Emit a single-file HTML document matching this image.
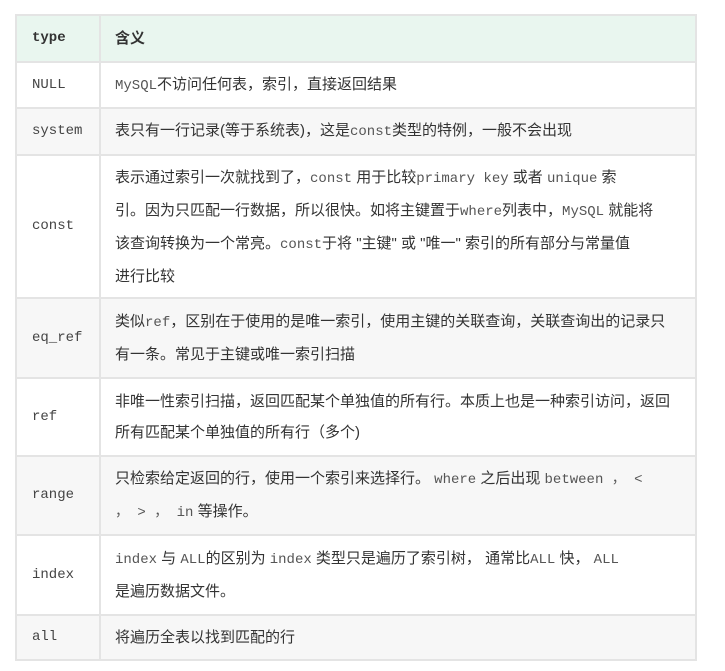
<!DOCTYPE html>
<html><head><meta charset="utf-8"><style>
body{margin:0;background:#fff;width:725px;height:671px;overflow:hidden;font-family:"Liberation Sans","Noto Sans CJK SC",sans-serif;color:#333;}
table{position:absolute;left:15px;top:14px;width:682px;border-collapse:collapse;font-size:15px;}
td{border:2px solid #e4e4e4;padding:0 8px 0 14px;vertical-align:middle;line-height:31px;white-space:nowrap;}
td:first-child{width:59px;font-family:"Liberation Mono",monospace;font-size:14px;color:#444;padding-left:15px;}
.m{font-family:"Liberation Mono",monospace;font-size:14px;color:#555;}
tr.g td{background:#f7f7f7}
tr.h td{background:#e9f6ef;font-weight:bold;color:#333;}
</style></head><body>
<table>
<tr class="h" style="height:47px"><td style="color:#333;font-weight:bold">type</td><td>含义</td></tr>
<tr style="height:46px"><td>NULL</td><td><span class="m">MySQL</span>不访问任何表，索引，直接返回结果</td></tr>
<tr class="g" style="height:47px"><td>system</td><td>表只有一行记录(等于系统表)，这是<span class="m">const</span>类型的特例，一般不会出现</td></tr>
<tr style="height:143px"><td>const</td><td>表示通过索引一次就找到了，<span class="m">const</span> 用于比较<span class="m">primary key</span> 或者 <span class="m">unique</span> 索<br>引。因为只匹配一行数据，所以很快。如将主键置于<span class="m">where</span>列表中，<span class="m">MySQL</span> 就能将<br>该查询转换为一个常亮。<span class="m">const</span>于将 "主键" 或 "唯一" 索引的所有部分与常量值<br>进行比较</td></tr>
<tr class="g" style="height:80px"><td>eq_ref</td><td>类似<span class="m">ref</span>，区别在于使用的是唯一索引，使用主键的关联查询，关联查询出的记录只<br>有一条。常见于主键或唯一索引扫描</td></tr>
<tr style="height:78px"><td>ref</td><td>非唯一性索引扫描，返回匹配某个单独值的所有行。本质上也是一种索引访问，返回<br>所有匹配某个单独值的所有行（多个)</td></tr>
<tr class="g" style="height:79px"><td>range</td><td>只检索给定返回的行，使用一个索引来选择行。 <span class="m">where</span> 之后出现 <span class="m">between ， &lt;</span><br><span class="m">， &gt; ， in</span> 等操作。</td></tr>
<tr style="height:80px"><td>index</td><td><span class="m">index</span> 与 <span class="m">ALL</span>的区别为 <span class="m">index</span> 类型只是遍历了索引树， 通常比<span class="m">ALL</span> 快， <span class="m">ALL</span><br>是遍历数据文件。</td></tr>
<tr class="g" style="height:45px"><td>all</td><td>将遍历全表以找到匹配的行</td></tr>
</table>
</body></html>
